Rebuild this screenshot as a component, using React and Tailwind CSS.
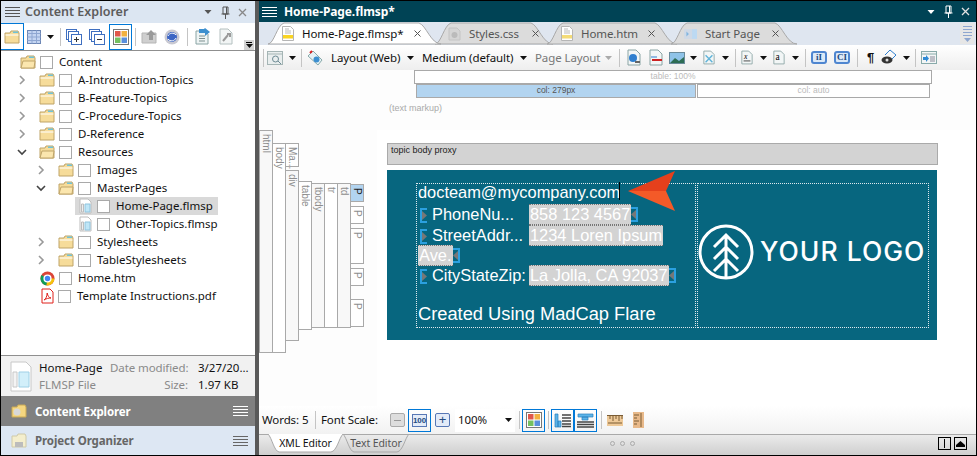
const UI = "font-['Noto_Sans','Liberation_Sans',sans-serif]";

function Folder({ open, dim }) {
  return (
    <svg width="16" height="14" viewBox="0 0 16 14" className="shrink-0">
      <path d="M1 3h5l1-2h7l1 2v10H1z" fill={dim ? "#f3eccb" : "#f6dc9a"} stroke="#bfa468" />
      <path d="M9 1.500h5v1.500H9z" fill="#6fc3d8" />
      {open ? <path d="M1 13l2-7h12l-1 7z" fill="#fbe6ae" stroke="#bfa468" /> : <path d="M1.500 5h13" stroke="#fff" />}
    </svg>
  );
}
function Check() {
  return <span className="block w-[13px] h-[13px] border border-[#a9a9a9] bg-white shrink-0" />;
}
function Chevron({ down }) {
  return (
    <svg width="10" height="10" viewBox="0 0 10 10" className="shrink-0">
      <path d={down ? "M1 3l4 4 4-4" : "M3 1l4 4-4 4"} fill="none" stroke={down ? "#444" : "#999"} strokeWidth="1.600" />
    </svg>
  );
}
function FileT() {
  return (
    <svg width="13" height="16" viewBox="0 0 13 16" className="shrink-0">
      <path d="M1 1h8l3 3v11H1z" fill="#fff" stroke="#bdbdbd" />
      <path d="M6 6h5v8H6z" fill="#bfe6f7" stroke="#8fc4de" />
      <path d="M2.500 6h2v8h-2z" fill="#eee" stroke="#bdbdbd" />
    </svg>
  );
}
function Chrome() {
  return (
    <svg width="15" height="15" viewBox="0 0 15 15" className="shrink-0">
      <circle cx="7.500" cy="7.500" r="7" fill="#db4437" />
      <path d="M7.500 7.500L1.500 4a7 7 0 0 0 5 10.500z" fill="#0f9d58" />
      <path d="M7.500 7.500h7a7 7 0 0 1-8 7z" fill="#f4c20d" />
      <circle cx="7.500" cy="7.500" r="3.400" fill="#4285f4" stroke="#fff" strokeWidth="1.400" />
    </svg>
  );
}
function Pdf() {
  return (
    <svg width="13" height="16" viewBox="0 0 13 16" className="shrink-0">
      <path d="M1 1h8l3 3v11H1z" fill="#fff" stroke="#e0201b" />
      <path d="M3 12c2-1 3-4 3.200-7 .6 3 1.500 4.500 3.800 5-2.500 0-4.500.5-7 2z" fill="none" stroke="#e0201b" />
    </svg>
  );
}

const rows = [
  { t: "Content", pad: "pl-[19px]", icon: <Folder open /> },
  { t: "A-Introduction-Topics", pad: "pl-[14px]", sp: "w-[11px]", ch: "r", icon: <Folder /> },
  { t: "B-Feature-Topics", pad: "pl-[14px]", sp: "w-[11px]", ch: "r", icon: <Folder /> },
  { t: "C-Procedure-Topics", pad: "pl-[14px]", sp: "w-[11px]", ch: "r", icon: <Folder /> },
  { t: "D-Reference", pad: "pl-[14px]", sp: "w-[11px]", ch: "r", icon: <Folder /> },
  { t: "Resources", pad: "pl-[14px]", sp: "w-[11px]", ch: "d", icon: <Folder open /> },
  { t: "Images", pad: "pl-[33px]", sp: "w-[11px]", ch: "r", icon: <Folder /> },
  { t: "MasterPages", pad: "pl-[33px]", sp: "w-[11px]", ch: "d", icon: <Folder open /> },
  { t: "Home-Page.flmsp", pad: "pl-[78px]", file: true, sel: true, icon: <FileT /> },
  { t: "Other-Topics.flmsp", pad: "pl-[78px]", file: true, icon: <FileT /> },
  { t: "Stylesheets", pad: "pl-[33px]", sp: "w-[11px]", ch: "r", icon: <Folder /> },
  { t: "TableStylesheets", pad: "pl-[33px]", sp: "w-[11px]", ch: "r", icon: <Folder /> },
  { t: "Home.htm", pad: "pl-[39px]", icon: <Chrome /> },
  { t: "Template Instructions.pdf", pad: "pl-[40px]", icon: <Pdf /> },
];

function Row({ r }) {
  return (
    <div className={`relative flex items-center h-[18px] ${r.pad}`}>
      {r.sel && <span className="absolute left-[74px] w-[143px] top-0 h-[18px] bg-[#d9d9d9]" />}
      {r.ch && <span className="relative w-[13px] flex justify-center"><Chevron down={r.ch === "d"} /></span>}
      {r.ch && <span className={r.sp} />}
      <span className="relative flex items-center">
        {r.icon}
        <span className={r.file ? "ml-[5px]" : "ml-[4px]"}><Check /></span>
        <span className="ml-[6px] text-[11.5px] leading-[18px] text-[#111] whitespace-nowrap">{r.t}</span>
      </span>
    </div>
  );
}

function Lines({ c = "#555", w = 14 }) {
  return (
    <svg width={w} height="12" viewBox={`0 0 ${w} 12`} className="shrink-0">
      <path d={`M0 1.500h${w}M0 4.500h${w}M0 7.500h${w}M0 10.500h${w}`} stroke={c} />
    </svg>
  );
}
function Sep({ className = "" }) {
  return <span className={`block w-px h-[18px] bg-[#c4c4c4] shrink-0 ${className}`} />;
}
function Caret({ className = "", c = "#111" }) {
  return (
    <svg width="7" height="4" viewBox="0 0 7 4" className={`shrink-0 ${className}`}>
      <path d="M0 0h7L3.500 4z" fill={c} />
    </svg>
  );
}
function Squares() {
  return (
    <svg width="16" height="16" viewBox="0 0 16 16">
      <rect x=".5" y=".5" width="15" height="15" fill="#fff" stroke="#777" />
      <rect x="2" y="2" width="5.500" height="5.500" fill="#e0574a" />
      <rect x="8.500" y="2" width="5.500" height="5.500" fill="#f3b13f" />
      <rect x="2" y="8.500" width="5.500" height="5.500" fill="#75c060" />
      <rect x="8.500" y="8.500" width="5.500" height="5.500" fill="#5a8fdc" />
    </svg>
  );
}
function Focus({ children, className = "" }) {
  return <span className={`flex items-center justify-center border border-[#0078d7] shrink-0 ${className}`}>{children}</span>;
}
function Stack({ sign }) {
  return (
    <svg width="16" height="16" viewBox="0 0 16 16" className="shrink-0">
      <rect x=".5" y=".5" width="10" height="10" fill="#fff" stroke="#3f6fc0" />
      <rect x="2.500" y="2.500" width="10" height="10" fill="#fff" stroke="#3f6fc0" />
      <rect x="5.500" y="5.500" width="10" height="10" fill="#fff" stroke="#3f6fc0" />
      <path d={sign === "+" ? "M8 10.500h5M10.500 8v5" : "M8 10.500h5"} stroke="#333" />
    </svg>
  );
}
function Doc({ children, w = 14, h = 17 }) {
  return (
    <svg width={w} height={h} viewBox="0 0 14 17" className="shrink-0">
      <path d="M1 1h8l4 4v11H1z" fill="#f2f6f6" stroke="#8aa4a4" />
      {children}
    </svg>
  );
}

function LeftToolbar() {
  return (
    <div className="flex items-center h-[28px] bg-white border-b border-[#8f8f8f] relative">
      <Focus className="w-[23px] h-[27px] border-l-0"><Folder /></Focus>
      <svg width="14" height="14" viewBox="0 0 14 14" className="ml-[3px] shrink-0">
        <rect x=".5" y=".5" width="13" height="13" fill="#c4d5f2" stroke="#6c86b4" />
        <path d="M.5 3.500h13M.5 7h13M.5 10.500h13M5 .5v13M9.500 .5v13" stroke="#8fa7d2" />
      </svg>
      <Caret className="ml-[6px]" />
      <Sep className="ml-[6px]" />
      <span className="ml-[5px]"><Stack sign="+" /></span>
      <span className="ml-[7px]"><Stack sign="-" /></span>
      <Focus className="w-[23px] h-[26px] ml-[4px]"><Squares /></Focus>
      <Sep className="ml-[3px]" />
      <svg width="16" height="15" viewBox="0 0 16 15" className="ml-[5px] shrink-0">
        <path d="M1 4h9l5 0v10H1z" fill="#cfcfcf" stroke="#b5b5b5" />
        <path d="M10 1l5 5h-3v5H8V6H5z" fill="#9a9a9a" />
      </svg>
      <svg width="16" height="16" viewBox="0 0 16 16" className="ml-[7px] shrink-0">
        <circle cx="8" cy="8" r="7.500" fill="#c9c9d2" />
        <circle cx="8" cy="8" r="5" fill="#3d66c4" />
        <path d="M4 7c1-3 6-4 8-1M12 9c-1 3-6 4-8 1" fill="none" stroke="#fff" />
      </svg>
      <Sep className="ml-[7px]" />
      <svg width="15" height="17" viewBox="0 0 15 17" className="ml-[7px] shrink-0">
        <path d="M1 3h9l3 3v10H1z" fill="#eef4f4" stroke="#8aa4a4" />
        <path d="M4 8h6M4 10.500h6M4 13h6" stroke="#7d8f8f" />
        <path d="M4 1h5l1-1 5 4-5 4V5H4z" fill="#3d90cf" />
      </svg>
      <svg width="14" height="17" viewBox="0 0 14 17" className="ml-[9px] shrink-0">
        <path d="M1 1h8l4 4v11H1z" fill="#f2f5f5" stroke="#b4c0c0" />
        <path d="M4 13l5-6M8 6l3 0 0 3" fill="none" stroke="#9a9a9a" strokeWidth="2" />
      </svg>
      <span className="absolute right-[1px] bottom-0 w-[10px] h-[10px] bg-[#d4d4d4] flex flex-col items-center justify-center gap-[1px]">
        <span className="block w-[6px] h-px bg-black" />
        <Caret />
      </span>
    </div>
  );
}

function LeftPanel() {
  return (
    <div className={`w-[255px] h-full flex flex-col shrink-0 bg-white border-l border-black ${UI}`}>
      <div className="h-[22px] flex items-center bg-[#dce6f2] pl-[4px] pr-[8px] shrink-0">
        <Lines c="#555" w="15" />
        <span className="ml-[5px] text-[12.5px] font-semibold text-[#5c5c5c] whitespace-nowrap">Content Explorer</span>
        <span className="ml-auto flex items-center">
          <Caret c="#555" className="w-[8px]" />
          <svg width="9" height="13" viewBox="0 0 9 13" className="ml-[9px]"><path d="M2 1h5v7H2zM0.500 8h8M4.500 8v5M5.500 1v7" fill="none" stroke="#555" /></svg>
          <svg width="9" height="9" viewBox="0 0 9 9" className="ml-[8px]"><path d="M1 1l7 7M8 1l-7 7" stroke="#888" strokeWidth="1.300" /></svg>
        </span>
      </div>
      <LeftToolbar />
      <div className="flex-1 pt-[2px] border-b border-[#8f8f8f] overflow-hidden">
        {rows.map((r) => <Row key={r.t} r={r} />)}
      </div>
      <div className="h-[40px] bg-[#f1f1f1] shrink-0 flex items-center pl-[9px] text-[11.5px] leading-[17px]">
        <svg width="22" height="31" viewBox="0 0 22 31" className="shrink-0">
          <path d="M1 1h15l5 5v24H1z" fill="#fff" stroke="#c8c8c8" />
          <path d="M9 11h10v15H9z" fill="#d2effa" stroke="#9fd0e6" />
          <path d="M3 11h4v15H3z" fill="#f4f4f4" stroke="#c8c8c8" />
        </svg>
        <span className="ml-[7px] w-[71px] shrink-0">
          <span className="block text-[#111] whitespace-nowrap">Home-Page</span>
          <span className="block text-[#8a8a8a]">FLMSP File</span>
        </span>
        <span className="w-[78px] text-right text-[#8a8a8a] shrink-0 tracking-[-0.1px]">
          <span className="block whitespace-nowrap">Date modified:</span>
          <span className="block">Size:</span>
        </span>
        <span className="ml-[10px] text-[#111] whitespace-nowrap">
          <span className="block">3/27/20...</span>
          <span className="block">1.97 KB</span>
        </span>
      </div>
      <div className="h-[30px] bg-[#808080] shrink-0 flex items-center pl-[10px] pr-[7px]">
        <svg width="16" height="14" viewBox="0 0 16 14"><path d="M1 3h5l1-2h7l1 2v10H1z" fill="#f5d67f" stroke="#c9a956" /><circle cx="6" cy="8" r="3.500" fill="#d8d8d8" /></svg>
        <span className="ml-[8px] pt-px text-[11.5px] font-bold text-white whitespace-nowrap tracking-[-0.1px]">Content Explorer</span>
        <span className="ml-auto"><Lines c="#fff" w="15" /></span>
      </div>
      <div className="h-[29px] bg-[#dde7f3] shrink-0 flex items-center pl-[10px] pr-[7px]">
        <svg width="16" height="15" viewBox="0 0 16 15"><path d="M1 3h5l1-2h7l1 2v11H1z" fill="#f4eecd" stroke="#cfc9a8" /><path d="M4 9h8v5H4z" fill="#bcbcbc" /></svg>
        <span className="ml-[8px] pt-px text-[11.5px] font-bold text-[#666] whitespace-nowrap tracking-[-0.1px]">Project Organizer</span>
        <span className="ml-auto"><Lines c="#666" w="15" /></span>
      </div>
    </div>
  );
}

function Tab({ w, active, icon, label, textW }) {
  const path = `M0 22C6 22 9 3 16 1H${w - 22}C${w - 15} 3 ${w - 10} 22 ${w} 22Z`;
  return (
    <div className={`relative h-[23px] shrink-0 -mr-[6px] ${active ? "z-10" : ""} ${w === 173 ? "w-[173px]" : w === 118 ? "w-[118px]" : w === 130 ? "w-[130px]" : "w-[126px]"}`}>
      <svg width={w} height="23" viewBox={`0 0 ${w} 23`} className="absolute inset-0">
        <path d={path} fill={active ? "#fff" : "#dcdcdc"} stroke="#a9a9a9" />
      </svg>
      <div className="relative flex items-center h-full pl-[13px]">
        <span className="w-[13px] flex justify-center">{icon}</span>
        <span className={`ml-[8px] text-[11.5px] tracking-[-0.1px] whitespace-nowrap ${active ? "text-[#111]" : "text-[#555]"} ${textW}`}>{label}</span>
        <svg width="7" height="7" viewBox="0 0 7 7" className="ml-[11px] shrink-0"><path d="M.5.500l6 6M6.500.500l-6 6" stroke="#555" /></svg>
      </div>
    </div>
  );
}
function TabDoc({ bright }) {
  return (
    <svg width="12" height="15" viewBox="0 0 12 15">
      <path d="M.5.500h8l3 3v11H.5z" fill="#fff" stroke="#b5b5b5" />
      <rect x="1" y="9" width="10" height="3.500" fill={bright ? "#f9d423" : "#f4dc78"} />
      <path d="M3 3h4M3 5h6M3 7h6" stroke="#bbb" />
    </svg>
  );
}

function Tabs() {
  return (
    <div className="h-[23px] flex items-end bg-[#dfe6f0] pl-[9px] relative shrink-0">
      <Tab w={173} active icon={<TabDoc bright />} label="Home-Page.flmsp*" textW="w-[101px]" />
      <Tab w={118} icon={<svg width="13" height="14" viewBox="0 0 13 14"><path d="M1 1h8l3 3v9H1z" fill="#d5d5d5" stroke="#c4c4c4" /><circle cx="6.500" cy="8" r="3" fill="#bbb" /></svg>} label="Styles.css" textW="w-[52px]" />
      <Tab w={130} icon={<TabDoc />} label="Home.htm" textW="w-[56px]" />
      <Tab w={126} icon={<svg width="16" height="12" viewBox="0 0 16 12"><rect width="16" height="12" fill="#cfd9e6" /><rect x="10" width="6" height="12" fill="#bcd9f2" /><path d="M3 3l3 3-3 3z" fill="#7fb5e0" /></svg>} label="Start Page" textW="w-[56px]" />
      <span className="ml-auto mr-[2px] mb-[1px] w-[14px] h-[21px] bg-[#e6e6e6] flex flex-col items-center justify-center gap-[2px]">
        <span className="block w-[9px] h-px bg-[#8ea6cf]" />
        <span className="block w-[9px] h-px bg-[#8ea6cf]" />
        <span className="block w-[9px] h-px bg-[#8ea6cf]" />
        <span className="block w-[9px] h-px bg-[#8ea6cf]" />
        <Caret c="#8ea6cf" />
      </span>
    </div>
  );
}

function EditorToolbar() {
  return (
    <div className="h-[25px] flex items-center bg-gradient-to-b from-white to-[#eeeeee] shrink-0 pl-[4px] text-[11.5px] tracking-[-0.1px] text-[#111]">
      <Sep />
      <svg width="16" height="14" viewBox="0 0 16 14" className="ml-[3px] shrink-0"><rect x=".5" y=".5" width="15" height="13" fill="#e9eeee" stroke="#a5b5b5" /><path d="M.5 3h15" stroke="#a5b5b5" /><circle cx="8.500" cy="8" r="3" fill="none" stroke="#6d8a94" /><path d="M11 10l3 3" stroke="#6d8a94" /></svg>
      <Caret className="ml-[6px]" />
      <Sep className="ml-[5px]" />
      <svg width="16" height="16" viewBox="0 0 16 16" className="ml-[5px] shrink-0"><path d="M1 6l5-5 9 9-4 5z" fill="#e6f1f5" stroke="#8aa" /><circle cx="9.500" cy="9.500" r="3" fill="#3c8fd0" /><path d="M3 3l2-2" stroke="#d22" strokeWidth="2" /></svg>
      <span className="ml-[8px] whitespace-nowrap w-[71px]">Layout (Web)</span>
      <Caret className="ml-[5px]" />
      <span className="ml-[8px] whitespace-nowrap w-[93px]">Medium (default)</span>
      <Caret className="ml-[5px]" />
      <span className="ml-[8px] whitespace-nowrap w-[65px] text-[#777]">Page Layout</span>
      <Caret c="#aaa" className="ml-[5px]" />
      <Sep className="ml-[7px]" />
      <span className="ml-[7px]"><Doc><circle cx="6" cy="9" r="4" fill="#2f7fcf" /><path d="M8 13h5" stroke="#666" strokeWidth="2" /></Doc></span>
      <span className="ml-[8px]"><Doc><path d="M2 8h6" stroke="#2f7fcf" /><path d="M3 11h10" stroke="#c22" strokeWidth="2" /></Doc></span>
      <svg width="16" height="12" viewBox="0 0 16 12" className="ml-[6px] shrink-0"><rect x=".5" y=".5" width="15" height="11" fill="#8fc3e8" stroke="#6a8a9a" /><path d="M1 11l5-5 4 3 5-4v6z" fill="#2d6d54" /></svg>
      <Caret className="ml-[5px]" />
      <span className="ml-[6px]"><Doc w={12}><path d="M3 6l8 8M11 6l-8 8" stroke="#5fb3d9" strokeWidth="1.600" /></Doc></span>
      <Caret className="ml-[7px]" />
      <Sep className="ml-[6px]" />
      <span className="ml-[5px]"><Doc w={12}><text x="3.500" y="10" fontSize="9" fontFamily="Liberation Serif" fontStyle="italic">x</text><path d="M3 12.500h8" stroke="#333" /></Doc></span>
      <Caret className="ml-[7px]" />
      <span className="ml-[6px]"><Doc w={12}><text x="3" y="12" fontSize="11" fontFamily="Liberation Serif">a</text></Doc></span>
      <Caret className="ml-[7px]" />
      <Sep className="ml-[6px]" />
      <span className="ml-[5px] w-[16px] h-[13px] rounded-[3px] border-2 border-[#4f86d0] bg-[#dbe9f8] flex items-center justify-center text-[9px] leading-none font-bold text-[#244a80] font-['Liberation_Serif',serif]">iI</span>
      <span className="ml-[7px] w-[16px] h-[13px] rounded-[3px] border-2 border-[#4f86d0] bg-[#dbe9f8] flex items-center justify-center text-[9px] leading-none font-bold text-[#244a80] font-['Liberation_Serif',serif]">CI</span>
      <Sep className="ml-[7px]" />
      <span className="ml-[9px] text-[13px] font-bold font-['Liberation_Sans',sans-serif]">¶</span>
      <svg width="17" height="17" viewBox="0 0 17 17" className="ml-[7px] shrink-0"><path d="M9 1l6 5-5 5" fill="none" stroke="#2f7fcf" /><path d="M9 1L4 6" stroke="#2f7fcf" fill="none" /><ellipse cx="6" cy="11" rx="5.500" ry="3.500" fill="#333" /><circle cx="6" cy="11" r="1.500" fill="#ddd" /></svg>
      <Caret className="ml-[5px]" />
      <Sep className="ml-[5px]" />
      <svg width="16" height="13" viewBox="0 0 16 13" className="ml-[5px] shrink-0"><rect x=".5" y=".5" width="15" height="12" fill="#f3f6f6" stroke="#8aa" /><path d="M.5 3h15" stroke="#8aa" /><path d="M9 6h5M9 8h5M9 10h5" stroke="#889" /><path d="M2 6h3V4l3 3.500L5 11V9H2z" fill="#2f8ad4" /></svg>
    </div>
  );
}

function TableProxy() {
  const lbl = "font-['Liberation_Sans',sans-serif] text-[8.5px] leading-[11px] text-center";
  return (
    <div className="ml-[155px] w-[518px]">
      <div className={`h-[14px] border border-[#a9a9a9] bg-white text-[#bbb] ${lbl}`}>table: 100%</div>
      <div className="flex ml-[2px] w-[514px] gap-px">
        <div className={`w-[280px] h-[14px] border border-[#a9a9a9] bg-[#b2d4f0] text-[#555] ${lbl}`}>col: 279px</div>
        <div className={`flex-1 h-[14px] border border-[#a9a9a9] bg-white text-[#bbb] ${lbl}`}>col: auto</div>
      </div>
    </div>
  );
}

function V({ children, className = "", dark }) {
  return (
    <div className={`w-[14px] -mr-px border border-[#a9a9a9] flex flex-col items-center pt-[3px] ${className}`}>
      <span className={`[writing-mode:vertical-rl] font-['Liberation_Sans',sans-serif] text-[10px] leading-[12px] whitespace-nowrap ${dark ? "text-[#222]" : "text-[#8e8e8e]"}`}>{children}</span>
    </div>
  );
}

function Structure() {
  return (
    <div className="w-[118px] shrink-0 flex items-start">
      <V className="h-[223px] bg-[#f8f8f8]">html</V>
      <V className="mt-[13px] h-[210px] bg-white">body</V>
      <div className="flex flex-col gap-[3px] mt-[13px]">
        <V className="h-[24px] bg-white">Ma...</V>
        <V className="h-[171px] bg-[#f8f8f8]">div</V>
      </div>
      <V className="mt-[51px] h-[149px] bg-white">table</V>
      <V className="mt-[53px] h-[145px] bg-[#f8f8f8]">tbody</V>
      <V className="mt-[53px] h-[145px] bg-white">tr</V>
      <V className="mt-[53px] h-[145px] bg-[#f8f8f8]">td</V>
      <div className="flex flex-col mt-[54px]">
        <V dark className="h-[18px] bg-[#b2d4f0]">P</V>
        <V className="mt-[4px] h-[18px] bg-white">P</V>
        <V className="mt-[4px] h-[36px] bg-white">P</V>
        <V className="mt-[4px] h-[18px] bg-white">P</V>
        <V className="mt-[13px] h-[28px] bg-white">P</V>
      </div>
    </div>
  );
}

function Br({ right }) {
  return (
    <span className={`inline-flex shrink-0 items-center h-[15px] w-[7px] border-y-2 border-[#2ba0e0] ${right ? "border-r-2 justify-start" : "border-l-2 justify-end"}`}>
      <svg width="5" height="9" viewBox="0 0 5 9"><path d={right ? "M5 0v9L0 4.500z" : "M0 0v9l5-4.500z"} fill="#777" /></svg>
    </span>
  );
}
function Val({ children }) {
  return <span className="bg-[#d3d3d3] border-y border-dotted border-[#777] text-white px-px">{children}</span>;
}

function Preview() {
  return (
    <div className="relative w-[550px] h-[170px] mt-[5px] bg-[#07667f] font-['Liberation_Sans',sans-serif] text-white text-[16.4px] leading-[19px]">
      <div className="flex ml-[29px] pt-[13px] gap-[1px]">
        <div className="w-[280px] h-[145px] border border-dotted border-[#dfe9ee] pl-px whitespace-nowrap overflow-hidden">
          <p className="h-[20px] leading-[16px]">docteam@mycompany.com</p>
          <p className="h-[21px] flex items-center">
            <span className="ml-[2px]"><Br /></span>
            <span className="ml-[5px] w-[97px]">PhoneNu...</span>
            <Val>858 123 4567</Val><Br right />
          </p>
          <p className="h-[20px] flex items-center">
            <span className="ml-[2px]"><Br /></span>
            <span className="ml-[5px] w-[97px]">StreetAddr...</span>
            <Val>1234 Loren Ipsum</Val>
          </p>
          <p className="h-[20px] flex items-center">
            <Val>Ave.</Val><Br right />
          </p>
          <p className="h-[21px] flex items-center">
            <span className="ml-[2px]"><Br /></span>
            <span className="ml-[5px] w-[97px]">CityStateZip:</span>
            <Val>La Jolla, CA 92037</Val><Br right />
          </p>
          <p className="mt-[17px] text-[18.300px] leading-[22px]">Created Using MadCap Flare</p>
        </div>
        <div className="w-[232px] h-[145px] border border-dotted border-[#dfe9ee] flex items-center pb-[8px]">
          <svg width="56" height="56" viewBox="0 0 56 56" className="shrink-0">
            <circle cx="28" cy="28" r="26" fill="none" stroke="#fff" strokeWidth="3" />
            <path d="M28 54V11M16 23l12-12 12 12M16 35l12-12 12 12M16 47l12-12 12 12" fill="none" stroke="#fff" strokeWidth="3" />
          </svg>
          <span className="ml-[6px] font-['Inter',sans-serif] font-medium text-[26.5px] leading-none text-white whitespace-nowrap tracking-[1px]">YOUR LOGO</span>
        </div>
      </div>
      <span className="absolute left-[232px] top-[12px] w-px h-[18px] bg-black" />
      <svg width="50" height="42" viewBox="0 0 50 42" className="absolute left-[241px] top-[0px]">
        <path d="M0 21L47 1l-9 20z" fill="#e5401c" />
        <path d="M0 21l38 0 9 20z" fill="#f45a28" />
      </svg>
    </div>
  );
}

function Editor() {
  return (
    <div className="flex-1 bg-[#fdfdfd] flex flex-col min-h-0">
      <TableProxy />
      <div className="ml-[130px] mt-[3px] h-[29px] font-['Liberation_Sans',sans-serif] text-[9px] leading-[14px] text-[#aaa]">(text markup)</div>
      <div className="flex flex-1 min-h-0">
        <Structure />
        <div className="flex-1 bg-white pl-[10px] pt-[13px]">
          <div className="w-[551px] h-[22px] border border-[#aaa] bg-[#d3d3d3] font-['Liberation_Sans',sans-serif] text-[9px] leading-[12px] text-[#222] pl-[3px]">topic body proxy</div>
          <Preview />
        </div>
      </div>
    </div>
  );
}

function BottomBar() {
  return (
    <div className="h-[28px] flex items-center bg-gradient-to-b from-white to-[#f2f2f2] shrink-0 pl-[3px] text-[11.5px] tracking-[-0.1px] text-[#111]">
      <span className="whitespace-nowrap w-[47px]">Words: 5</span>
      <Sep className="ml-[6px]" />
      <span className="ml-[5px] whitespace-nowrap w-[58px]">Font Scale:</span>
      <span className="ml-[11px] w-[15px] h-[14px] rounded-[2px] border border-[#aaa] bg-[#ddd] flex items-center justify-center"><span className="block w-[7px] h-px bg-[#999]" /></span>
      <Focus className="ml-[3px] w-[23px] h-[23px]">
        <span className="w-[15px] h-[13px] border border-[#5777b5] bg-[#e3ebf8] text-[8px] leading-[11px] text-center font-bold text-[#244a80] font-['Liberation_Sans',sans-serif]">100</span>
      </Focus>
      <span className="ml-[4px] w-[15px] h-[14px] rounded-[2px] border border-[#5777b5] bg-[#e3ebf8] text-[13px] leading-[11px] text-center text-[#244a80] font-['Liberation_Sans',sans-serif]">+</span>
      <span className="ml-[5px] w-[60px] h-[23px] bg-white flex items-center pl-[3px] pr-[3px]">
        100%
        <span className="ml-auto"><Caret /></span>
      </span>
      <Sep className="ml-[4px]" />
      <Focus className="ml-[2px] w-[23px] h-[23px]"><Squares /></Focus>
      <Sep className="ml-[3px]" />
      <Focus className="ml-[2px] w-[23px] h-[23px]">
        <svg width="17" height="15" viewBox="0 0 17 15"><path d="M1 1h3v13H1zM4 8h3v6H4z" fill="#5db4e8" stroke="#2a7fbd" strokeWidth=".7" /><path d="M8 2h9M8 5h9M8 8h9M8 11h9M8 13.500h9" stroke="#444" strokeWidth="1.500" /></svg>
      </Focus>
      <Focus className="w-[23px] h-[23px]">
        <svg width="17" height="15" viewBox="0 0 17 15"><path d="M1 1h15v3H1zM5 4h6v3H5z" fill="#5db4e8" stroke="#2a7fbd" strokeWidth=".7" /><path d="M0 9h17M0 11.500h17M0 14h17" stroke="#444" strokeWidth="1.500" /></svg>
      </Focus>
      <Sep className="ml-[4px]" />
      <svg width="16" height="12" viewBox="0 0 16 12" className="ml-[5px] shrink-0"><rect width="16" height="11" y="1" fill="#eec998" /><path d="M0 1.500h16M3 1v4M6 1v6M9 1v4M12 1v6M15 1v4M1 9h14" stroke="#7a5c34" /></svg>
      <svg width="11" height="16" viewBox="0 0 11 16" className="ml-[10px] shrink-0"><rect width="11" height="16" fill="#e8b98a" /><path d="M1 3h5M1 6h3M1 9h5M1 12h3M8 1v14" stroke="#7a5c34" /></svg>
    </div>
  );
}

function BottomTab({ active, label, widthCls, w }) {
  return (
    <div className={`relative h-[19px] shrink-0 -mt-px flex items-center justify-center text-[10.5px] tracking-[-0.1px] ${widthCls} ${active ? "text-[#111]" : "text-[#555]"}`}>
      <svg width={w} height="19" viewBox={`0 0 ${w} 19`} className="absolute inset-0">
        <path d={`M0 0C4 4 6 17 11 18H${w - 12}C${w - 6} 17 ${w - 4} 4 ${w} 0`} fill={active ? "#fff" : "none"} stroke="#a9a9a9" />
      </svg>
      <span className="relative">{label}</span>
    </div>
  );
}

function BottomTabs() {
  return (
    <div className="h-[21px] flex bg-gradient-to-b from-[#ebebeb] to-[#cfcfcf] border-t border-[#a9a9a9] items-start pl-[9px] pr-[9px] shrink-0">
      <BottomTab active label="XML Editor" widthCls="w-[75px]" w={75} />
      <BottomTab label="Text Editor" widthCls="w-[66px]" w={66} />
      <span className="ml-[201px] mt-[6px] flex gap-[5px]">
        <span className="block w-[5px] h-[5px] rounded-full border border-[#aaa]" />
        <span className="block w-[5px] h-[5px] rounded-full border border-[#aaa]" />
        <span className="block w-[5px] h-[5px] rounded-full border border-[#aaa]" />
      </span>
      <span className="ml-auto mt-[2px] flex gap-[3px]">
        <span className="w-[13px] h-[13px] border border-black flex items-center justify-center"><span className="block w-px h-[9px] bg-black" /></span>
        <span className="w-[13px] h-[13px] border border-black flex items-center justify-center">
          <svg width="9" height="6" viewBox="0 0 9 6"><path d="M4.500 0L9 4v2H0V4z" fill="#000" /></svg>
        </span>
      </span>
    </div>
  );
}

function RightPanel() {
  return (
    <div className={`flex-1 min-w-0 h-full flex flex-col border-l-4 border-[#595959] border-r border-r-black ${UI}`}>
      <div className="h-[21px] bg-[#004355] flex items-center pl-[3px] pr-[6px] shrink-0">
        <Lines c="#fff" w="15" />
        <span className="ml-[7px] text-[12px] font-bold text-white whitespace-nowrap tracking-[-0.1px]">Home-Page.flmsp*</span>
        <span className="ml-auto flex items-center">
          <Caret c="#fff" className="w-[8px]" />
          <svg width="9" height="13" viewBox="0 0 9 13" className="ml-[9px]"><path d="M2 1h5v7H2zM0.500 8h8M4.500 8v5M5.500 1v7" fill="none" stroke="#fff" /></svg>
          <svg width="9" height="9" viewBox="0 0 9 9" className="ml-[8px]"><path d="M1 1l7 7M8 1l-7 7" stroke="#e2e2e2" strokeWidth="1.300" /></svg>
        </span>
      </div>
      <Tabs />
      <EditorToolbar />
      <Editor />
      <BottomBar />
      <BottomTabs />
    </div>
  );
}

export default function App() {
  return (
    <div className="w-[977px] h-[456px] flex overflow-hidden border-y border-black bg-white">
      <LeftPanel />
      <RightPanel />
    </div>
  );
}
